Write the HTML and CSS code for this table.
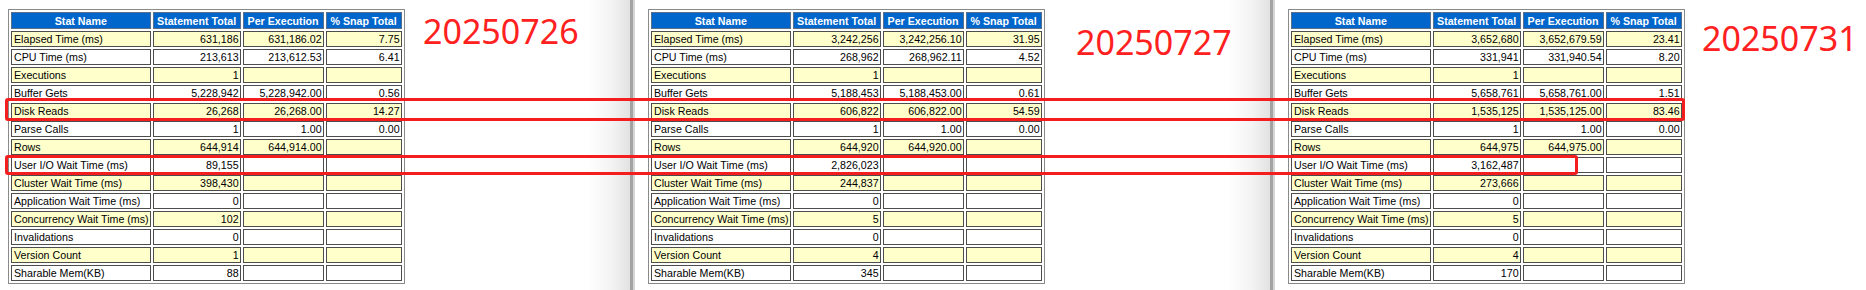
FILE: index.html
```html
<!DOCTYPE html>
<html lang="en">
<head>
    <meta charset="UTF-8">
    <title>SQL Statistics - snapshots compared</title>
    <link rel="stylesheet" href="styles.css">
</head>
<body>
    <div class="screen">
        <div class="strip">
            <!-- 20250726 -->
            <div class="panel">
                <div class="sheet">
                    <table class="tdiff">
                        <tr><th>Stat Name</th><th>Statement Total</th><th>Per Execution</th><th>% Snap Total</th></tr>
                        <tr class="c"><td>Elapsed Time (ms)</td><td>631,186</td><td>631,186.02</td><td>7.75</td></tr>
                        <tr><td>CPU Time (ms)</td><td>213,613</td><td>213,612.53</td><td>6.41</td></tr>
                        <tr class="c"><td>Executions</td><td>1</td><td></td><td></td></tr>
                        <tr><td>Buffer Gets</td><td>5,228,942</td><td>5,228,942.00</td><td>0.56</td></tr>
                        <tr class="c"><td>Disk Reads</td><td>26,268</td><td>26,268.00</td><td>14.27</td></tr>
                        <tr><td>Parse Calls</td><td>1</td><td>1.00</td><td>0.00</td></tr>
                        <tr class="c"><td>Rows</td><td>644,914</td><td>644,914.00</td><td></td></tr>
                        <tr><td>User I/O Wait Time (ms)</td><td>89,155</td><td></td><td></td></tr>
                        <tr class="c"><td>Cluster Wait Time (ms)</td><td>398,430</td><td></td><td></td></tr>
                        <tr><td>Application Wait Time (ms)</td><td>0</td><td></td><td></td></tr>
                        <tr class="c"><td>Concurrency Wait Time (ms)</td><td>102</td><td></td><td></td></tr>
                        <tr><td>Invalidations</td><td>0</td><td></td><td></td></tr>
                        <tr class="c"><td>Version Count</td><td>1</td><td></td><td></td></tr>
                        <tr><td>Sharable Mem(KB)</td><td>88</td><td></td><td></td></tr>
                    </table>
                    <div class="stamp stamp-1">20250726</div>
                </div>
                <div class="divider"></div>
            </div>

            <!-- 20250727 -->
            <div class="panel">
                <div class="sheet">
                    <table class="tdiff">
                        <tr><th>Stat Name</th><th>Statement Total</th><th>Per Execution</th><th>% Snap Total</th></tr>
                        <tr class="c"><td>Elapsed Time (ms)</td><td>3,242,256</td><td>3,242,256.10</td><td>31.95</td></tr>
                        <tr><td>CPU Time (ms)</td><td>268,962</td><td>268,962.11</td><td>4.52</td></tr>
                        <tr class="c"><td>Executions</td><td>1</td><td></td><td></td></tr>
                        <tr><td>Buffer Gets</td><td>5,188,453</td><td>5,188,453.00</td><td>0.61</td></tr>
                        <tr class="c"><td>Disk Reads</td><td>606,822</td><td>606,822.00</td><td>54.59</td></tr>
                        <tr><td>Parse Calls</td><td>1</td><td>1.00</td><td>0.00</td></tr>
                        <tr class="c"><td>Rows</td><td>644,920</td><td>644,920.00</td><td></td></tr>
                        <tr><td>User I/O Wait Time (ms)</td><td>2,826,023</td><td></td><td></td></tr>
                        <tr class="c"><td>Cluster Wait Time (ms)</td><td>244,837</td><td></td><td></td></tr>
                        <tr><td>Application Wait Time (ms)</td><td>0</td><td></td><td></td></tr>
                        <tr class="c"><td>Concurrency Wait Time (ms)</td><td>5</td><td></td><td></td></tr>
                        <tr><td>Invalidations</td><td>0</td><td></td><td></td></tr>
                        <tr class="c"><td>Version Count</td><td>4</td><td></td><td></td></tr>
                        <tr><td>Sharable Mem(KB)</td><td>345</td><td></td><td></td></tr>
                    </table>
                    <div class="stamp stamp-2">20250727</div>
                </div>
                <div class="divider"></div>
            </div>

            <!-- 20250731 -->
            <div class="panel last">
                <div class="sheet">
                    <table class="tdiff">
                        <tr><th>Stat Name</th><th>Statement Total</th><th>Per Execution</th><th>% Snap Total</th></tr>
                        <tr class="c"><td>Elapsed Time (ms)</td><td>3,652,680</td><td>3,652,679.59</td><td>23.41</td></tr>
                        <tr><td>CPU Time (ms)</td><td>331,941</td><td>331,940.54</td><td>8.20</td></tr>
                        <tr class="c"><td>Executions</td><td>1</td><td></td><td></td></tr>
                        <tr><td>Buffer Gets</td><td>5,658,761</td><td>5,658,761.00</td><td>1.51</td></tr>
                        <tr class="c"><td>Disk Reads</td><td>1,535,125</td><td>1,535,125.00</td><td>83.46</td></tr>
                        <tr><td>Parse Calls</td><td>1</td><td>1.00</td><td>0.00</td></tr>
                        <tr class="c"><td>Rows</td><td>644,975</td><td>644,975.00</td><td></td></tr>
                        <tr><td>User I/O Wait Time (ms)</td><td>3,162,487</td><td></td><td></td></tr>
                        <tr class="c"><td>Cluster Wait Time (ms)</td><td>273,666</td><td></td><td></td></tr>
                        <tr><td>Application Wait Time (ms)</td><td>0</td><td></td><td></td></tr>
                        <tr class="c"><td>Concurrency Wait Time (ms)</td><td>5</td><td></td><td></td></tr>
                        <tr><td>Invalidations</td><td>0</td><td></td><td></td></tr>
                        <tr class="c"><td>Version Count</td><td>4</td><td></td><td></td></tr>
                        <tr><td>Sharable Mem(KB)</td><td>170</td><td></td><td></td></tr>
                    </table>
                    <div class="stamp stamp-3">20250731</div>
                </div>
            </div>
        </div>

        <!-- Red highlight boxes drawn over the screenshots -->
        <div class="mark mark-disk"></div>
        <div class="mark mark-io"></div>
    </div>
</body>
</html>
```

FILE: styles.css
```css
* {
    margin: 0;
    padding: 0;
    box-sizing: border-box;
}

body {
    background: #fff;
    font-family: 'Liberation Sans', Arial, sans-serif;
}

.screen {
    position: relative;
    width: 1866px;
    height: 290px;
    overflow: hidden;
}

/* Three report windows side by side */
.strip {
    display: flex;
    margin-left: -5px;
    height: 290px;
}

.panel {
    display: flex;
    width: 640px;
    flex-shrink: 0;
}

.panel.last {
    flex: 1;
}

.sheet {
    position: relative;
    flex: 1;
    padding: 9px 0 0 13px;
    background: linear-gradient(to right, #fff calc(100% - 42px), #f3f3f3 calc(100% - 18px), #e2e2e2);
}

.panel.last .sheet {
    background: #fff;
}

.divider {
    width: 5px;
    background: linear-gradient(to right, #a3a3a3 0, #a3a3a3 3px, #d6d6d6 3px);
}

/* AWR table */
.tdiff {
    border: 1px solid #8a8a8a;
    border-spacing: 2px;
    table-layout: fixed;
    font-size: 8pt;
    color: #000;
}

.tdiff th {
    height: 17px;
    font-weight: bold;
    color: #fff;
    background: #0066CC;
    border: 1px solid #5a6f8a;
    text-align: center;
    padding: 0 2px;
    white-space: nowrap;
}

.tdiff th:nth-child(1) { width: 139px; }
.tdiff th:nth-child(2) { width: 88px; }
.tdiff th:nth-child(3) { width: 81px; }
.tdiff th:nth-child(4) { width: 76px; }

.tdiff td {
    height: 16px;
    line-height: 14px;
    padding: 0 1px 0 2px;
    border: 1px solid #4d4d4d;
    background: #fff;
    text-align: right;
    white-space: nowrap;
    overflow: hidden;
}

.tdiff td:first-child {
    text-align: left;
    padding-left: 2px;
}

.tdiff tr.c td {
    background: #FFFFCC;
}

/* Date labels written on the picture */
.stamp {
    position: absolute;
    font-family: 'Noto Sans', 'Open Sans', sans-serif;
    font-size: 34px;
    line-height: 1;
    color: #ff2020;
}

.stamp-1 { left: 428px; top: 14px; }
.stamp-2 { left: 441px; top: 25px; }
.stamp-3 { left: 427px; top: 21px; }

.mark {
    position: absolute;
    left: 5px;
    border: 3px solid #f41e1e;
    border-radius: 3px;
}

.mark-disk {
    top: 98px;
    width: 1680px;
    height: 23px;
}

.mark-io {
    top: 155px;
    width: 1573px;
    height: 20px;
}
```
